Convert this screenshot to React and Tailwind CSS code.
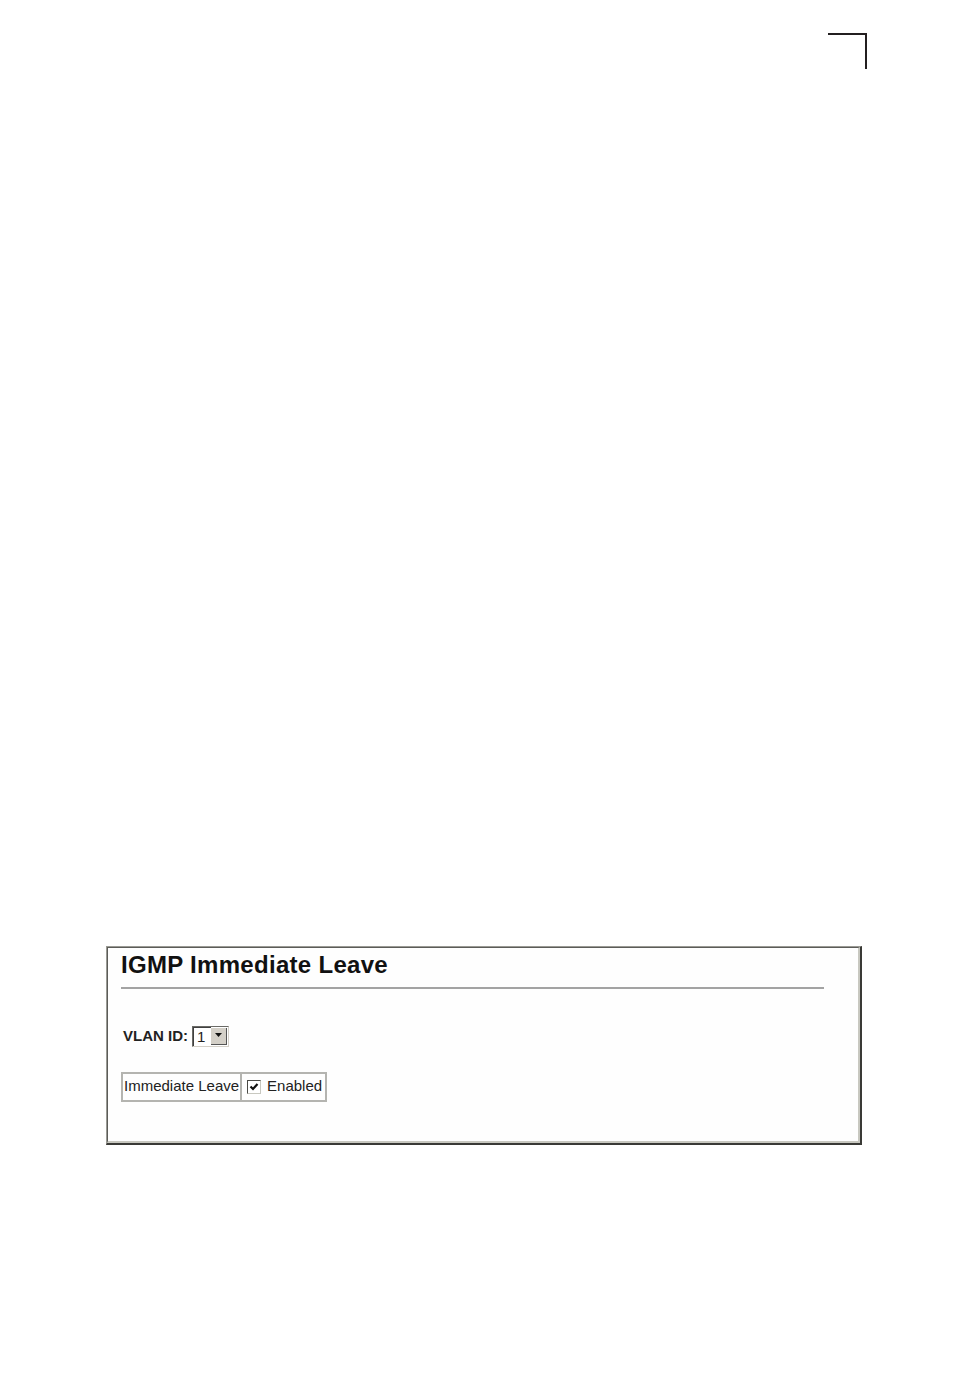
export default function App() {
  return (
    <div className="relative w-[954px] h-[1388px] bg-white overflow-hidden" style={{ fontFamily: '"Liberation Sans", Arial, sans-serif' }}>
      {/* crop mark */}
      <div className="absolute left-[828px] top-[33px] w-[39px] h-[36px] border-t-2 border-r-2 border-[#231f20]" />

      <div className="pt-[946px] pl-[106px]">
        <Panel />
      </div>
    </div>
  );
}

function Panel() {
  return (
    <div className="w-[756px] h-[199px] border-l border-t border-[#9a9a94] border-r-2 border-b-2 border-r-[#3a3a36] border-b-[#3a3a36]">
      <div className="h-full border-l border-t border-[#5c5c58] border-r-2 border-b-2 border-r-[#c8c8c0] border-b-[#c8c8c0] bg-[#fefefe]">
        <div className="pl-[13px] pt-[4px] pr-[34px]">
          <h1 className="text-[24px] leading-[26px] font-bold tracking-[0.3px] text-[#111]">IGMP Immediate Leave</h1>
          <div className="mt-[9px] h-[2px] bg-[#a3a3a3]" />

          <div className="mt-[36px] ml-[2px] flex items-center gap-[4px]">
            <span className="text-[15px] font-bold text-[#222]">VLAN ID:</span>
            <Select value="1" />
          </div>

          <div className="mt-[24px] inline-flex border-2 border-[#b4b4b0] h-[30px]">
            <div className="flex items-center px-[1px] text-[15px] text-[#222] border-r-2 border-[#b4b4b0]">
              Immediate Leave
            </div>
            <div className="flex items-center pl-[5px] pr-[3px] text-[15px] text-[#222] gap-[6px]">
              <Checkbox />
              <span>Enabled</span>
            </div>
          </div>
        </div>
      </div>
    </div>
  );
}

function Select({ value }) {
  return (
    <div className="flex h-[21px] w-[37px] border border-[#6a6a66] border-r-[#d4d0c8] border-b-[#d4d0c8] bg-white">
      <div className="flex-1 flex items-center pl-[3px] text-[15px] text-[#222] border-l border-t border-[#404040]">{value}</div>
      <div className="w-[16px] my-[1px] mr-[1px] bg-[#d4d0c8] flex items-center justify-center border-r border-b border-[#555]">
        <svg width="8" height="5" viewBox="0 0 8 5">
          <path d="M0 0 H7 L3.5 4 Z" fill="#111" />
        </svg>
      </div>
    </div>
  );
}

function Checkbox() {
  return (
    <div className="w-[14px] h-[14px] border border-[#4a4a46] border-r-[#c8c8c0] border-b-[#c8c8c0] bg-white flex items-center justify-center">
      <svg width="10" height="10" viewBox="0 0 10 10">
        <path d="M1.5 4.5 L4 7 L8.5 2" stroke="#111" strokeWidth="2.2" fill="none" />
      </svg>
    </div>
  );
}
